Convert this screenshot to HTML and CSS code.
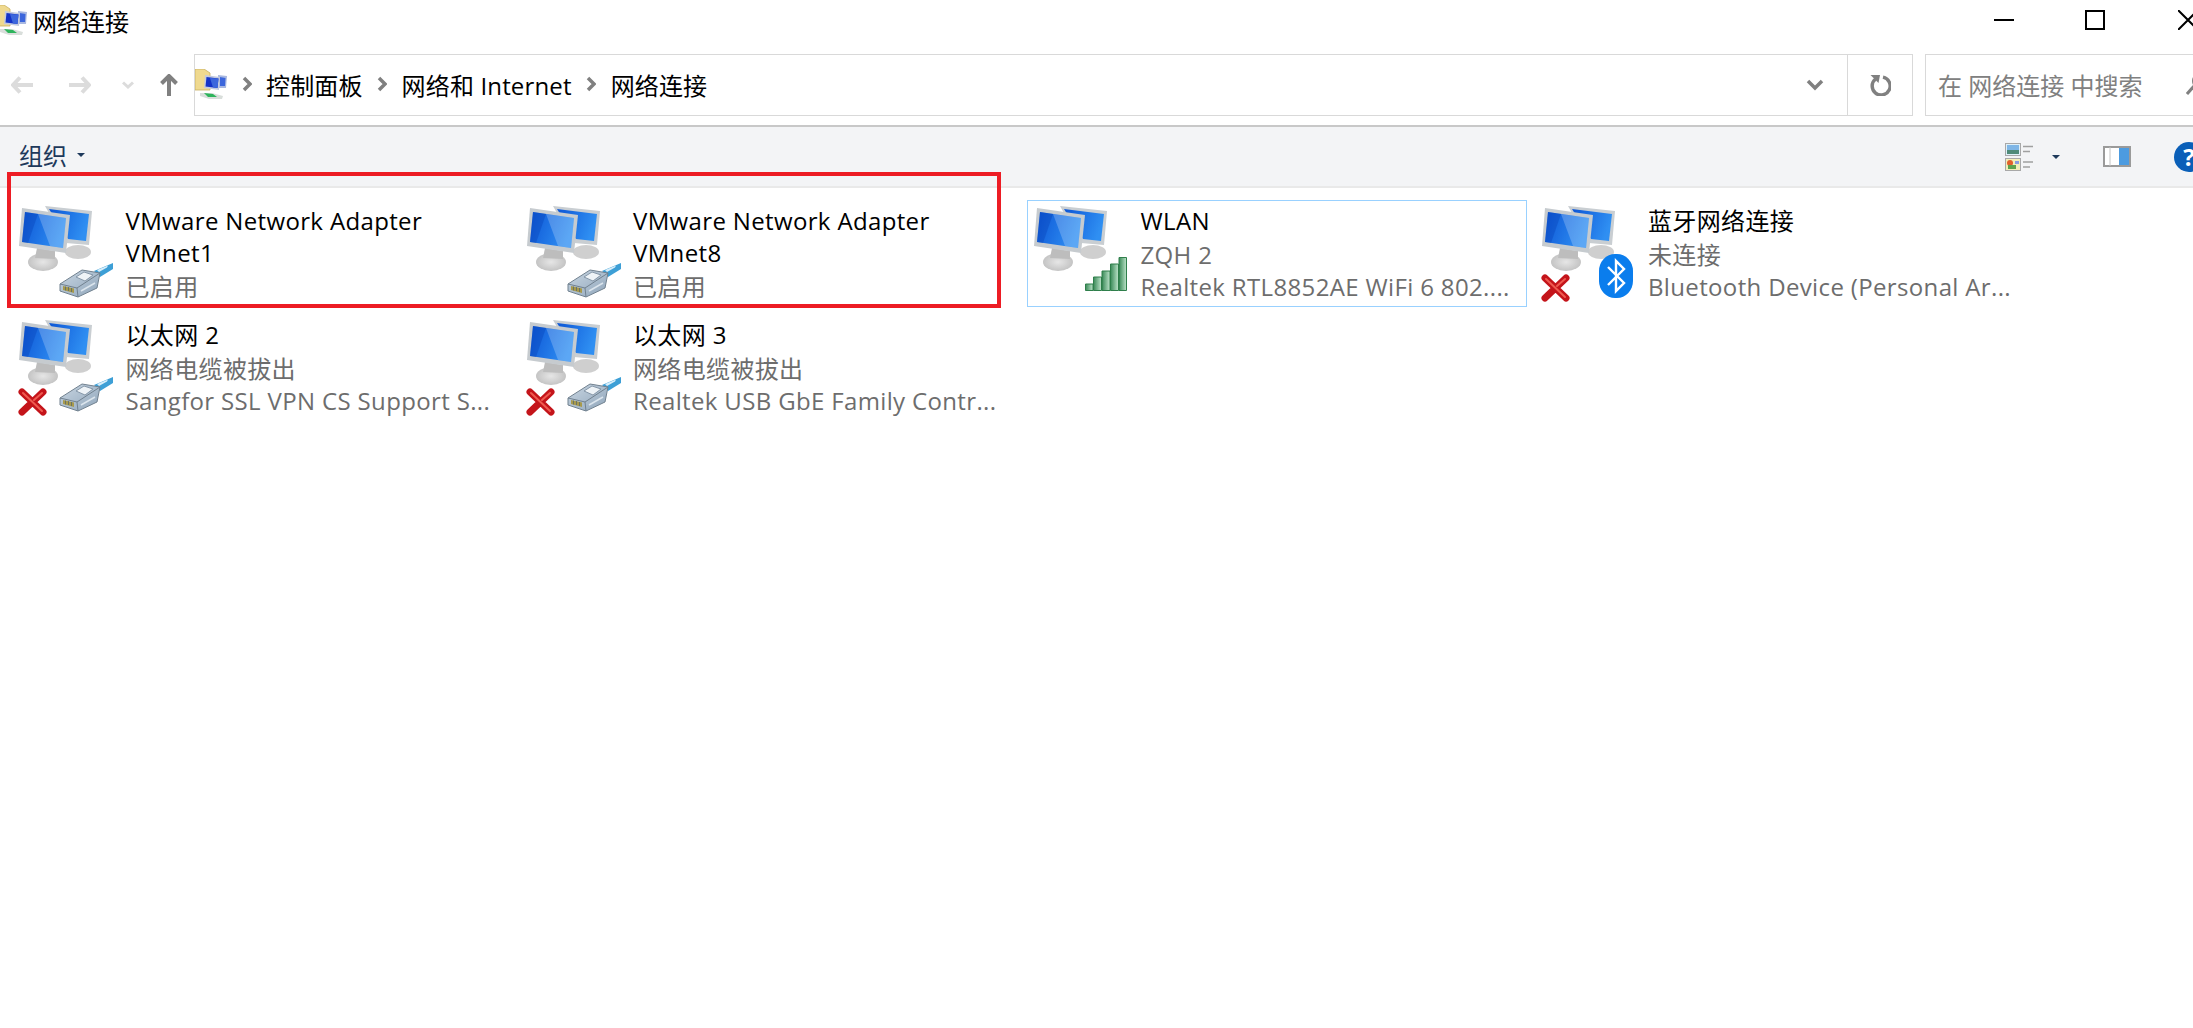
FILE: index.html
```html
<!DOCTYPE html>
<html lang="zh-CN">
<head>
    <meta charset="UTF-8">
    <title>网络连接</title>
    <link rel="stylesheet" href="styles.css">
</head>
<body>
    <svg class="defs" width="0" height="0">
        <defs>
            <linearGradient id="screenBlue" x1="0" y1="0" x2="1" y2="0.3">
                <stop offset="0" stop-color="#0d56d6"/>
                <stop offset="1" stop-color="#2f8ff2"/>
            </linearGradient>
            <linearGradient id="plugBody" x1="0" y1="0" x2="1" y2="1">
                <stop offset="0" stop-color="#c9d6e2"/>
                <stop offset="1" stop-color="#8fa5ba"/>
            </linearGradient>
            <linearGradient id="barGreen" x1="0" y1="0" x2="1" y2="0">
                <stop offset="0" stop-color="#3a8a58"/>
                <stop offset="1" stop-color="#bde4ca"/>
            </linearGradient>
            <radialGradient id="baseGrey">
                <stop offset="0" stop-color="#e6e6e6"/>
                <stop offset="1" stop-color="#c4c4c4"/>
            </radialGradient>
            <symbol id="monitors" viewBox="8 10 95 90">
                <ellipse cx="70" cy="58" rx="13" ry="7" fill="#cfcfcf"/>
                <polygon points="37,12 84,17 81,51 58,49" fill="#c9ced2"/>
                <polygon points="41,15 81,20 78,47 60,45" fill="url(#screenBlue)"/>
                <ellipse cx="35" cy="68" rx="15" ry="9" fill="url(#baseGrey)"/>
                <polygon points="29,54 47,57 47,65 27,64" fill="#bdbdbd"/>
                <polygon points="14,14 62,21 58,59 11,52" fill="#c6cbcf"/>
                <polygon points="17,18 58,24 55,54 14,48" fill="url(#screenBlue)"/>
                <polygon points="30,20 58,24 55,54 42,52" fill="#ffffff" opacity="0.22"/>
                <polygon points="17,18 30,20 20,49 14,48" fill="#063fb5" opacity="0.35"/>
            </symbol>
            <symbol id="plug" viewBox="49 65 54 35">
                <polygon points="84,73 103,65 103,71 90,79" fill="#3d9fd6"/>
                <polygon points="87,72 98,67.5 97,69.5 89,74" fill="#d8eefa"/>
                <polygon points="50,86 72,72 90,75 87,90 68,99 50,93" fill="url(#plugBody)" stroke="#71818f"/>
                <polyline points="50,86 67,90 90,75" fill="none" stroke="#71818f"/>
                <polyline points="67,90 68,99" fill="none" stroke="#71818f"/>
                <polygon points="53,88 64,90.5 64,95 53,92" fill="#a89a4c"/>
                <path d="M55.5 88.5 V92.5 M58.5 89 V93 M61.5 90 V94" stroke="#5c6a6a" stroke-width="0.8"/>
                <polyline points="66,79 74,74 83,77 75,83 66,79" fill="#eef3f7" stroke="#7e90a2" stroke-width="0.9"/>
                <polyline points="71,93 85,85" fill="none" stroke="#dbe5ed" stroke-width="1.6"/>
            </symbol>
            <symbol id="redX" viewBox="0 0 29 28">
                <path d="M4 4 L25 24 M25 4 L4 24" stroke="#c4141a" stroke-width="7" stroke-linecap="round"/>
                <path d="M5 5 L24 23 M24 5 L16 12" stroke="#ef5a50" stroke-width="2" stroke-linecap="round"/>
            </symbol>
            <symbol id="netFolder" viewBox="0 0 32 30">
                <path d="M0 0 H9 L15 4 V21 H0 Z" fill="#efd98f" stroke="#c8b060" stroke-width="0.8"/>
                <polygon points="23,6 32,7 31,19 24,19" fill="#a9b8e0"/>
                <polygon points="24.5,8 30.5,9 30,17 25,17" fill="#3c66dc"/>
                <polygon points="10,6 25,8 24,21 9,19" fill="#c3cade"/>
                <polygon points="11.5,8 23.5,9.5 22.5,19 10.5,17.5" fill="#1433c8"/>
                <polygon points="15,9 23.5,9.5 22.5,19 18,18.5" fill="#3c66dc"/>
                <polygon points="5,24 17,24 28,27 27,30 14,30 5,27" fill="#d9dedb"/>
                <polygon points="9,24 18,25 22,28 13,28" fill="#2eb45c"/>
            </symbol>
        </defs>
    </svg>

    <div class="titlebar">
        <div class="title">
            <svg class="title-icon"><use href="#netFolder"/></svg>
            <span>网络连接</span>
        </div>
        <div class="win-btns">
            <svg width="20" height="20" viewBox="0 0 20 20"><path d="M0 10 H20" stroke="#000" stroke-width="2"/></svg>
            <svg width="20" height="20" viewBox="0 0 20 20"><rect x="1" y="1" width="18" height="18" fill="none" stroke="#000" stroke-width="2"/></svg>
            <svg width="20" height="20" viewBox="0 0 20 20"><path d="M0 0 L20 20 M20 0 L0 20" stroke="#000" stroke-width="2"/></svg>
        </div>
    </div>

    <div class="navbar">
        <div class="nav-btns">
            <svg width="22" height="18" viewBox="0 0 22 18"><path d="M9 1.5 L2 9 L9 16.5 M2 9 H22" fill="none" stroke="#dcdcdc" stroke-width="4"/></svg>
            <svg width="22" height="18" viewBox="0 0 22 18"><path d="M13 1.5 L20 9 L13 16.5 M20 9 H0" fill="none" stroke="#dcdcdc" stroke-width="4"/></svg>
            <svg width="12" height="8" viewBox="0 0 12 8"><path d="M1 1.5 L6 6 L11 1.5" fill="none" stroke="#dcdcdc" stroke-width="3"/></svg>
            <svg width="18" height="22" viewBox="0 0 18 22"><path d="M1.5 9.5 L9 2 L16.5 9.5 M9 2 V22" fill="none" stroke="#808080" stroke-width="4"/></svg>
        </div>
        <div class="address">
            <div class="crumbs">
                <svg class="crumb-icon"><use href="#netFolder"/></svg>
                <svg class="chev" width="10" height="16" viewBox="0 0 10 16"><path d="M2 2 L8 8 L2 14" fill="none" stroke="#808080" stroke-width="3.5"/></svg>
                <span>控制面板</span>
                <svg class="chev" width="10" height="16" viewBox="0 0 10 16"><path d="M2 2 L8 8 L2 14" fill="none" stroke="#808080" stroke-width="3.5"/></svg>
                <span>网络和 Internet</span>
                <svg class="chev" width="10" height="16" viewBox="0 0 10 16"><path d="M2 2 L8 8 L2 14" fill="none" stroke="#808080" stroke-width="3.5"/></svg>
                <span>网络连接</span>
            </div>
            <div class="addr-drop">
                <svg width="18" height="12" viewBox="0 0 18 12"><path d="M2 2 L9 9 L16 2" fill="none" stroke="#808080" stroke-width="3.5"/></svg>
            </div>
            <div class="addr-refresh">
                <svg width="22" height="22" viewBox="0 0 22 22"><path d="M6.5 5 A9 9 0 1 0 14 3.2" fill="none" stroke="#808080" stroke-width="3.4"/><path d="M1.5 1 L11 1 L9.5 9 Z" fill="#808080"/></svg>
            </div>
        </div>
        <div class="search">
            <span>在 网络连接 中搜索</span>
            <svg width="24" height="24" viewBox="0 0 24 24"><path d="M1 22 L8 14" stroke="#808080" stroke-width="3"/><circle cx="14" cy="9" r="7" fill="none" stroke="#808080" stroke-width="2"/></svg>
        </div>
    </div>

    <div class="toolbar">
        <div class="organize">组织<i class="caret"></i></div>
        <div class="tools">
            <svg class="view-icon" width="28" height="28" viewBox="0 0 28 28">
                <rect x="0.5" y="0.5" width="15" height="12" fill="#dff0f8" stroke="#a8a8a8"/>
                <rect x="2" y="2" width="12" height="5" fill="#7fb6e6"/>
                <rect x="2" y="7" width="12" height="4" fill="#4f8a78"/>
                <rect x="0.5" y="15.5" width="15" height="12" fill="#f2eeb8" stroke="#a8a8a8"/>
                <circle cx="5" cy="20" r="3" fill="#e2602a"/>
                <rect x="3" y="22" width="8" height="4" fill="#5ea24c"/>
                <rect x="10" y="18" width="4" height="3" fill="#8a9ae0"/>
                <path d="M18 3.5 H28 M18 8.5 H25 M18 19 H28 M18 24 H25" stroke="#a0a0a0" stroke-width="1.4"/>
            </svg>
            <i class="caret view-caret"></i>
            <svg class="pane-icon" width="28" height="21" viewBox="0 0 28 21">
                <rect x="1" y="1" width="26" height="19" fill="#fff" stroke="#9a9a9a" stroke-width="2"/>
                <path d="M7 1 V20" stroke="#c4c4c4"/>
                <rect x="16" y="2" width="10" height="17" fill="#4c9be0"/>
            </svg>
            <div class="help">?</div>
        </div>
    </div>

    <div class="grid">
        <div class="item">
            <svg class="monitor"><use href="#monitors"/></svg>
            <svg class="overlay ov-plug"><use href="#plug"/></svg>
            <div class="info">
                <div class="name">VMware Network Adapter VMnet1</div>
                <div class="sub">已启用</div>
            </div>
        </div>
        <div class="item">
            <svg class="monitor"><use href="#monitors"/></svg>
            <svg class="overlay ov-plug"><use href="#plug"/></svg>
            <div class="info">
                <div class="name">VMware Network Adapter VMnet8</div>
                <div class="sub">已启用</div>
            </div>
        </div>
        <div class="item selected">
            <svg class="monitor"><use href="#monitors"/></svg>
            <svg class="overlay ov-wifi" viewBox="0 0 42 34">
                <path d="M0.5 27 H8 V33.5 H0.5 Z" fill="url(#barGreen)" stroke="#2f7f4b"/>
                <path d="M8.5 20 H16.5 V33.5 H8.5 Z" fill="url(#barGreen)" stroke="#2f7f4b"/>
                <path d="M17 14 H25 V33.5 H17 Z" fill="url(#barGreen)" stroke="#2f7f4b"/>
                <path d="M25.5 7 H33.5 V33.5 H25.5 Z" fill="url(#barGreen)" stroke="#2f7f4b"/>
                <path d="M34 0.5 H41.5 V33.5 H34 Z" fill="url(#barGreen)" stroke="#2f7f4b"/>
            </svg>
            <div class="info">
                <div class="name">WLAN</div>
                <div class="sub">ZQH 2</div>
                <div class="sub">Realtek RTL8852AE WiFi 6 802....</div>
            </div>
        </div>
        <div class="item">
            <svg class="monitor"><use href="#monitors"/></svg>
            <svg class="overlay ov-x"><use href="#redX"/></svg>
            <svg class="overlay ov-bt" viewBox="0 0 34 44">
                <rect x="0" y="0" width="34" height="44" rx="16" ry="17" fill="#0a7ded"/>
                <path d="M9 13 L25 29 L17 37 V7 L25 15 L9 31" fill="none" stroke="#fff" stroke-width="2.4"/>
            </svg>
            <div class="info">
                <div class="name">蓝牙网络连接</div>
                <div class="sub">未连接</div>
                <div class="sub">Bluetooth Device (Personal Ar...</div>
            </div>
        </div>
        <div class="item">
            <svg class="monitor"><use href="#monitors"/></svg>
            <svg class="overlay ov-plug"><use href="#plug"/></svg>
            <svg class="overlay ov-x"><use href="#redX"/></svg>
            <div class="info">
                <div class="name">以太网 2</div>
                <div class="sub">网络电缆被拔出</div>
                <div class="sub">Sangfor SSL VPN CS Support S...</div>
            </div>
        </div>
        <div class="item">
            <svg class="monitor"><use href="#monitors"/></svg>
            <svg class="overlay ov-plug"><use href="#plug"/></svg>
            <svg class="overlay ov-x"><use href="#redX"/></svg>
            <div class="info">
                <div class="name">以太网 3</div>
                <div class="sub">网络电缆被拔出</div>
                <div class="sub">Realtek USB GbE Family Contr...</div>
            </div>
        </div>
        <div class="highlight"></div>
    </div>
</body>
</html>
```

FILE: styles.css
```css
html, body {
    margin: 0;
    height: 100%;
    overflow: hidden;
}

body {
    background: #ffffff;
    color: #000000;
    font-family: "Open Sans", "Noto Sans CJK SC", sans-serif;
    font-size: 24px;
}

.defs {
    display: block;
    height: 0;
}

.titlebar {
    height: 54px;
    display: flex;
    justify-content: space-between;
    align-items: flex-start;
}

.title {
    display: flex;
    align-items: center;
    gap: 6px;
    height: 40px;
}

.title-icon {
    width: 32px;
    height: 30px;
    margin-left: -5px;
}

.win-btns {
    display: flex;
    gap: 71px;
    margin: 10px -5px 0 0;
}

.win-btns svg:nth-child(2) {
    margin-right: 2px;
}

.navbar {
    height: 62px;
    display: flex;
}

.nav-btns {
    width: 194px;
    flex-shrink: 0;
    display: flex;
    align-items: center;
    padding: 0 0 0 11px;
    box-sizing: border-box;
}

.nav-btns svg:nth-child(2) {
    margin-left: 36px;
}

.nav-btns svg:nth-child(3) {
    margin-left: 31px;
}

.nav-btns svg:nth-child(4) {
    margin-left: 26px;
}

.address {
    width: 1719px;
    flex-shrink: 0;
    display: flex;
    border: 1px solid #d9d9d9;
    box-sizing: border-box;
}

.crumbs {
    flex: 1;
    display: flex;
    align-items: center;
    padding: 0 0 2px 0;
    letter-spacing: 0.15px;
}

.crumb-icon {
    width: 32px;
    height: 30px;
}

.chev {
    margin: 0 14.5px;
}

.addr-drop {
    width: 41px;
    display: flex;
    align-items: center;
    box-sizing: border-box;
}

.addr-refresh {
    width: 65px;
    display: flex;
    align-items: center;
    justify-content: center;
    border-left: 1px solid #d9d9d9;
    box-sizing: border-box;
}

.search {
    width: 300px;
    flex-shrink: 0;
    margin-left: 12px;
    display: flex;
    align-items: center;
    gap: 44px;
    padding: 0 0 2px 12px;
    color: #808080;
    border: 1px solid #d9d9d9;
    box-sizing: border-box;
}

.search svg {
    flex-shrink: 0;
}

.toolbar {
    margin-top: 9px;
    height: 59px;
    display: flex;
    justify-content: space-between;
    align-items: center;
    background: #f3f4f6;
    border-top: 2px solid #c8c8c8;
    border-bottom: 2px solid #e9e9e9;
}

.organize {
    margin: 0 0 4px 19px;
    color: #1e395b;
    display: flex;
    align-items: center;
    gap: 10px;
}

.caret {
    display: block;
    width: 0;
    height: 0;
    border-left: 4px solid transparent;
    border-right: 4px solid transparent;
    border-top: 4px solid #1e395b;
}

.tools {
    display: flex;
    align-items: center;
}

.view-caret {
    margin-left: 19px;
}

.pane-icon {
    margin-left: 43px;
}

.help {
    width: 30px;
    height: 30px;
    flex-shrink: 0;
    margin: 0 -11px 0 43px;
    border-radius: 50%;
    background: #0a5fb8;
    color: #ffffff;
    font-weight: bold;
    font-size: 24px;
    line-height: 30px;
    text-align: center;
}

.grid {
    position: relative;
    display: grid;
    grid-template-columns: repeat(4, 500px);
    grid-auto-rows: 107px;
    column-gap: 7.5px;
    row-gap: 7px;
    padding: 12px 0 0 12px;
}

.item {
    position: relative;
    display: flex;
    box-sizing: border-box;
    border: 1px solid transparent;
}

.item.selected {
    border-color: #99d1ff;
}

.monitor {
    width: 95px;
    height: 90px;
    margin: 3px 0 0 3px;
    flex-shrink: 0;
    filter: blur(0.4px);
}

.overlay {
    position: absolute;
    filter: blur(0.3px);
}

.ov-plug {
    left: 46px;
    top: 62px;
    width: 54px;
    height: 35px;
}

.ov-wifi {
    left: 57px;
    top: 56px;
    width: 42px;
    height: 34px;
}

.ov-x {
    left: 5px;
    top: 73px;
    width: 29px;
    height: 28px;
}

.ov-bt {
    left: 63px;
    top: 53px;
    width: 34px;
    height: 44px;
}

.info {
    margin: 4px 0 0 14.5px;
    line-height: 32px;
    min-width: 0;
    letter-spacing: 0.35px;
}

.name {
    max-width: 370px;
    margin-bottom: 2px;
}

.sub {
    color: #6d6d6d;
    white-space: nowrap;
}

.highlight {
    position: absolute;
    left: 7px;
    top: -16px;
    width: 994px;
    height: 136px;
    box-sizing: border-box;
    border: 4px solid #ed1c24;
    pointer-events: none;
}
```
